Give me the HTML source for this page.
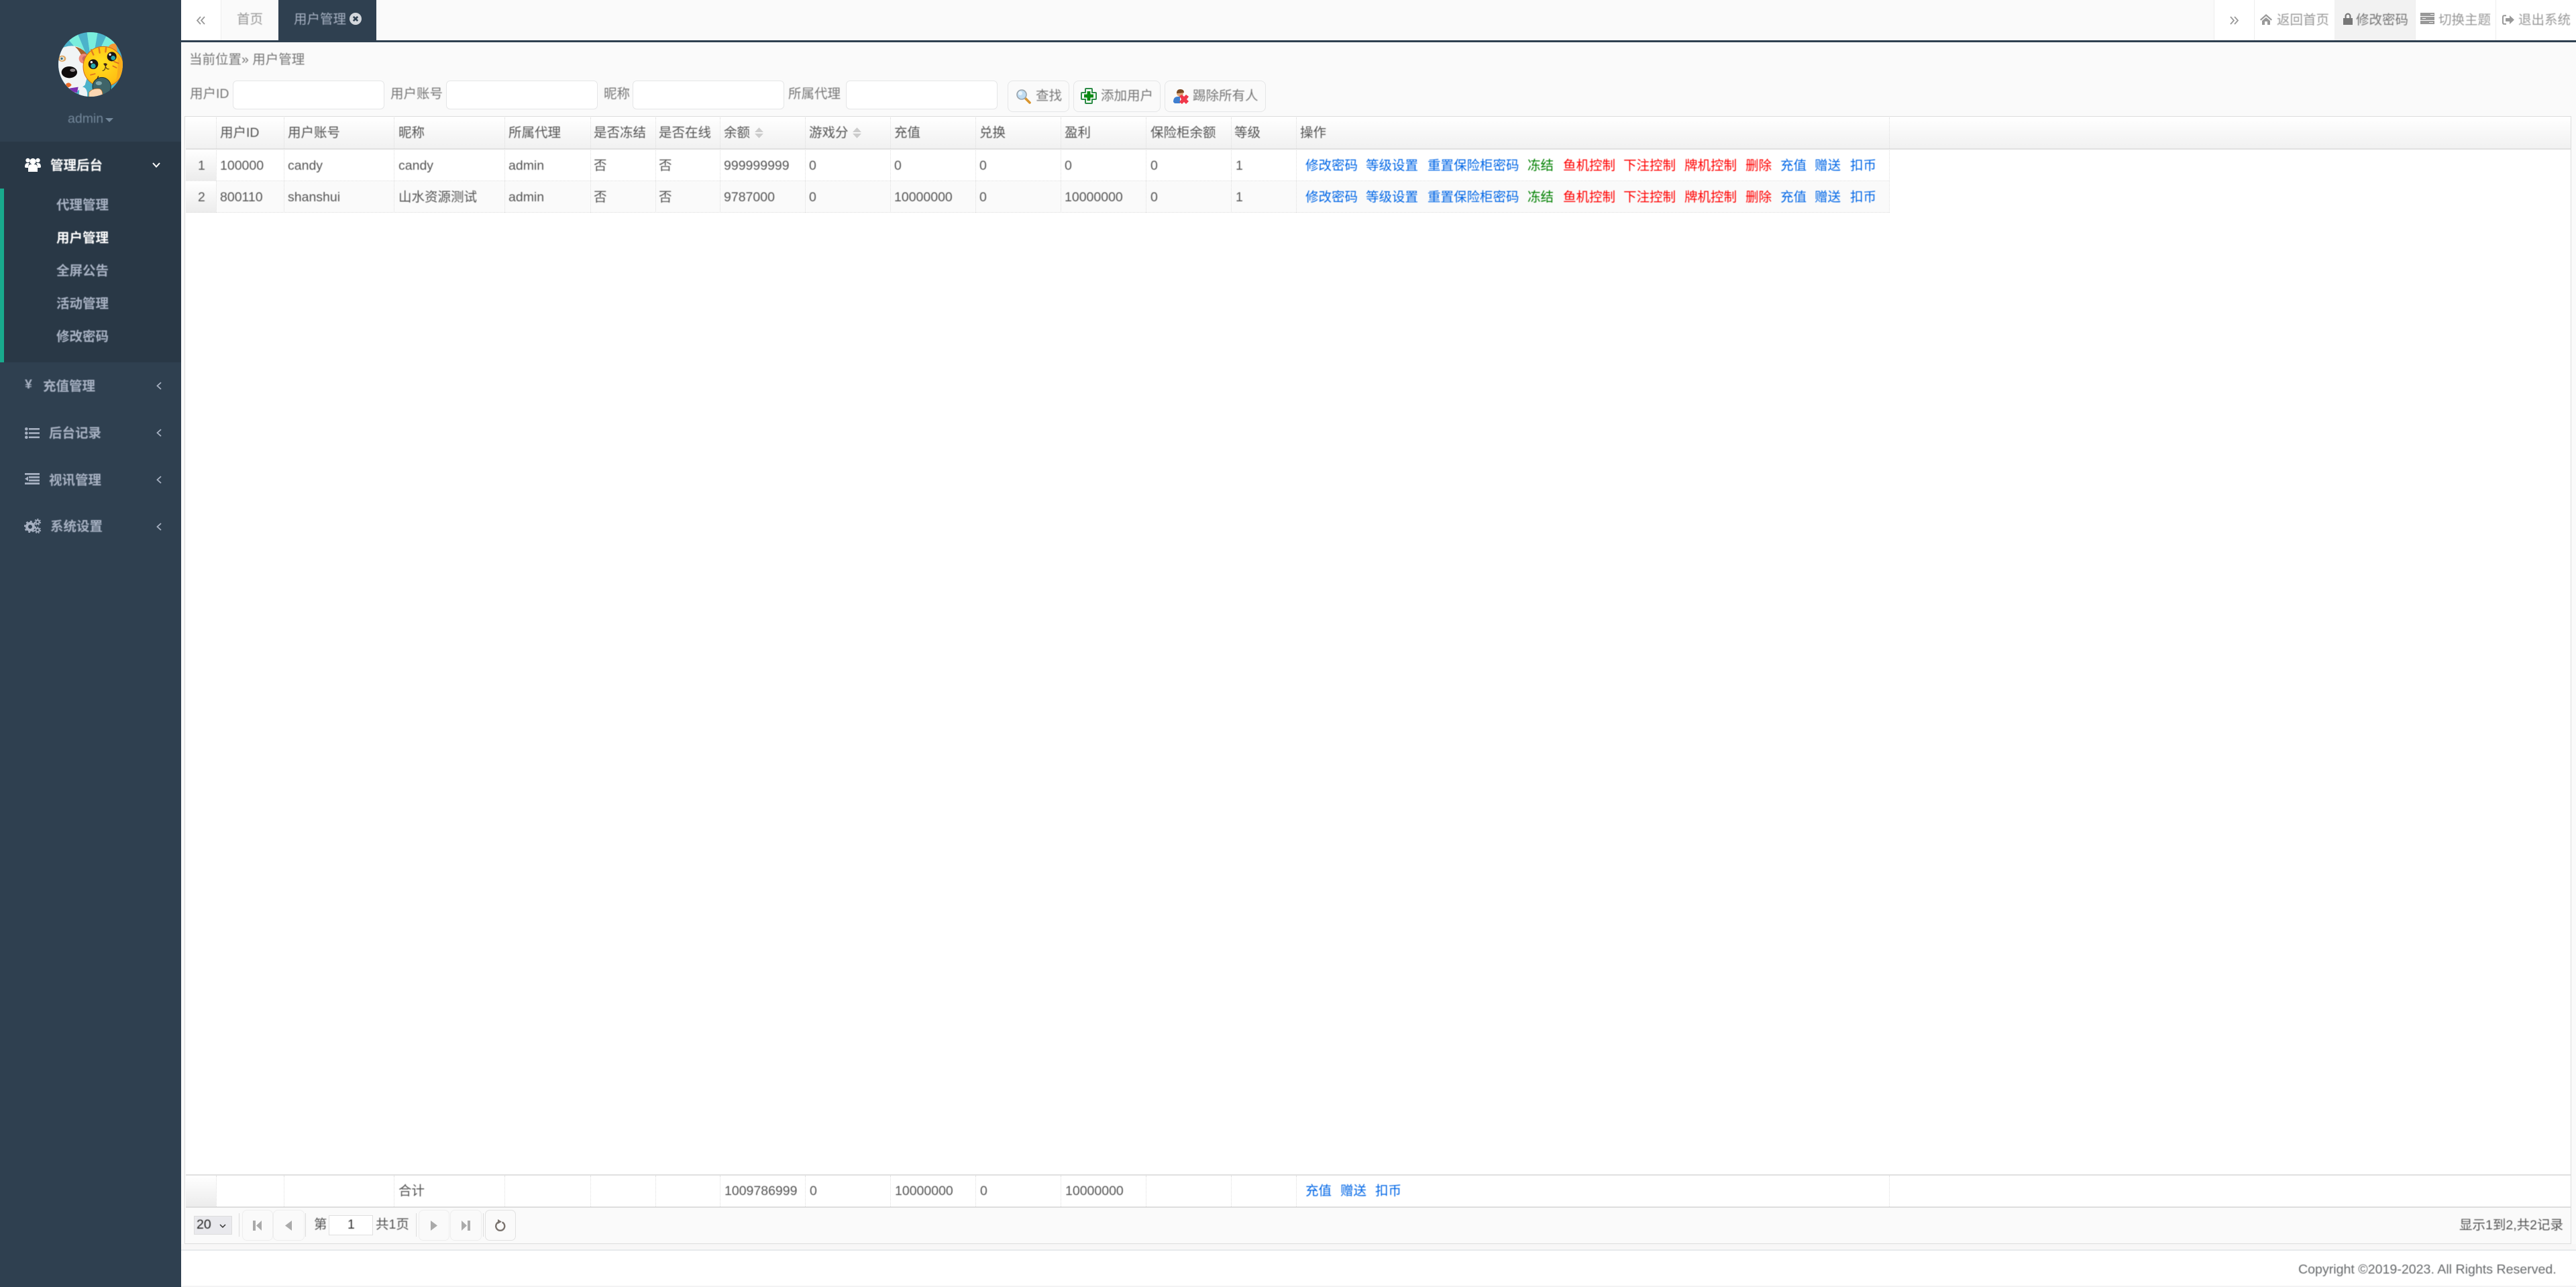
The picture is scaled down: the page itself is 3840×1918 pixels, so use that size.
<!DOCTYPE html>
<html lang="zh"><head><meta charset="utf-8"><title>用户管理</title>
<style>
html,body{margin:0;padding:0;width:3840px;height:1918px;overflow:hidden;background:#fff}
body{font-family:"Liberation Sans","Noto Sans CJK SC",sans-serif;font-size:19.5px;color:#555;position:relative}
.a{position:absolute}
.t{position:absolute;white-space:nowrap;line-height:30px;height:30px;filter:blur(.5px)}
.n{font-weight:700;color:#a7b1c2}
.v{position:absolute;width:0;border-left:1.5px dotted #dedede}
.h{position:absolute;height:0;border-top:1.5px dotted #dedede}
.l{color:#777}
.inp{position:absolute;top:120px;height:41px;background:#fff;border:1.5px solid #e5e6e7;border-radius:6px}
.btn{position:absolute;top:120px;height:45px;border:1.5px solid #e5e6e7;border-radius:8px;background:#fafafa}
.pb{position:absolute;top:1803px;height:44px;border:1.5px solid #eee;border-radius:7px;background:#fafafa}
.rn{position:absolute;left:277px;width:45px;background:linear-gradient(#fff,#ececec)}
.b{color:#0066e6}.g{color:#008000}.r{color:#f00}
svg{position:absolute;overflow:visible}
</style></head><body>

<!-- sidebar -->
<div class="a" style="left:0;top:0;width:270px;height:1918px;background:#2f4050"></div>
<div class="a" style="left:0;top:211px;width:270px;height:329px;background:#293846"></div>
<div class="a" style="left:0;top:281px;width:6px;height:259px;background:#19aa8d"></div>

<svg style="left:87px;top:48px" width="96" height="96" viewBox="81 54 288 288">
<defs><clipPath id="c"><circle cx="225" cy="198" r="144"/></clipPath>
<radialGradient id="cat" cx=".45" cy=".4" r=".75"><stop offset="0" stop-color="#ffe01f"/><stop offset=".7" stop-color="#ffc013"/><stop offset="1" stop-color="#f78e10"/></radialGradient></defs>
<g clip-path="url(#c)">
<rect x="81" y="54" width="288" height="288" fill="#4cb2ca"/>
<path d="M230 210L208 50H258ZM230 210L120 80L165 55ZM230 210L300 60L345 90Z" fill="#7aeedd"/>
<path d="M230 210L258 50H300ZM165 55L208 50L230 210Z" fill="#4cb2ca"/>
<path d="M60 150Q110 105 165 118Q215 135 222 215L200 290L150 330H60Z" fill="#f1f4f5"/>
<path d="M155 118Q205 128 222 180L205 240Q195 215 190 175Q180 140 155 118Z" fill="#a8612c"/>
<circle cx="195" cy="172" r="22" fill="#ee8a7a"/><circle cx="200" cy="172" r="12" fill="#c4626a"/>
<ellipse cx="98" cy="172" rx="17" ry="14" fill="#dfa763"/><ellipse cx="97" cy="172" rx="10" ry="9" fill="#e6eff0"/><circle cx="96" cy="172" r="5" fill="#3d6a75"/>
<ellipse cx="130" cy="233" rx="35" ry="26" fill="#0e0c0c"/><ellipse cx="145" cy="224" rx="12" ry="7" fill="#8b8587"/>
<path d="M115 285q15-12 25 5q-10 14-25 10z" fill="#ea6a28"/>
<path d="M130 305l40-6-5 25-30-4z" fill="#7b2fb2"/>
<path d="M175 300q30-8 35 25v25h-38z" fill="#eef3f5"/>
<path d="M305 118q15-18 35-12l5 30-20 10z" fill="#f59a35"/>
<circle cx="282" cy="208" r="90" fill="url(#cat)" stroke="#d06a18" stroke-width="3"/>
<path d="M345 160q30 20 25 70l-30 40q10-50 5-110z" fill="#f8ab1c"/>
<path d="M228 133l10 22M262 122l4 24M295 120l-3 22" stroke="#e07a22" stroke-width="7" stroke-linecap="round"/>
<path d="M330 185l20 8M325 205l16 8M225 245l20-5" stroke="#dc6e22" stroke-width="5" stroke-linecap="round"/>
<circle cx="237" cy="197" r="22" fill="#1b1414"/><circle cx="237" cy="205" r="11" fill="#27a7ae"/><circle cx="229" cy="188" r="5" fill="#fff"/>
<circle cx="320" cy="163" r="21" fill="#1b1414"/><circle cx="326" cy="169" r="10" fill="#27a7ae"/><circle cx="312" cy="154" r="5" fill="#fff"/>
<path d="M282 195q10-6 18 2l-8 12z" fill="#3a2216"/><path d="M292 208q-2 18-14 18M292 208q6 14 16 10" stroke="#3a2216" stroke-width="3" fill="none"/>
<circle cx="275" cy="297" r="41" fill="#3f6468" stroke="#1d3033" stroke-width="3"/><ellipse cx="262" cy="282" rx="14" ry="9" fill="#7fa5a7"/>
<path d="M255 262l5-12" stroke="#3a2216" stroke-width="4"/>
<path d="M218 345v-22q15-20 47-16q18 8 12 38z" fill="#fcd7b2" stroke="#c66a1a" stroke-width="2"/>
</g></svg>

<div class="t" style="left:101px;top:162px;color:#73879a">admin</div>
<svg style="left:157px;top:176px" width="12" height="7"><path d="M0 0H12L6 6Z" fill="#73879a"/></svg>

<svg style="left:37px;top:235px" width="24" height="21" viewBox="0 0 24 21" fill="#fff"><circle cx="4.5" cy="4" r="3.2"/><circle cx="19.5" cy="4" r="3.2"/><circle cx="12" cy="5.5" r="4.6"/><path d="M0 14q0-6 4-6h3q-2 3-2 7H1zM24 14q0-6-4-6h-3q2 3 2 7h4zM5 21v-5q0-6 4-6h6q4 0 4 6v5z"/></svg>
<div class="t" style="left:75px;top:232px;font-weight:700;color:#fff">管理后台</div>
<svg style="left:227px;top:242px" width="12" height="8" fill="none"><path d="M1 1l5 5.5L11 1" stroke="#fff" stroke-width="2"/></svg>

<div class="t n" style="left:84px;top:291px">代理管理</div>
<div class="t n" style="left:84px;top:340px;color:#fff">用户管理</div>
<div class="t n" style="left:84px;top:389px">全屏公告</div>
<div class="t n" style="left:84px;top:438px">活动管理</div>
<div class="t n" style="left:84px;top:487px">修改密码</div>

<div class="t n" style="left:37px;top:558px">¥</div>
<div class="t n" style="left:64px;top:561px">充值管理</div>
<svg style="left:233px;top:569px" width="8" height="12" fill="none"><path d="M7 1L1.5 6L7 11" stroke="#a7b1c2" stroke-width="1.8"/></svg>

<svg style="left:37px;top:637px" width="22" height="17" fill="#a7b1c2"><circle cx="2.3" cy="2.3" r="2.3"/><circle cx="2.3" cy="8.5" r="2.3"/><circle cx="2.3" cy="14.7" r="2.3"/><rect x="6" y="1" width="16" height="2.6"/><rect x="6" y="7.2" width="16" height="2.6"/><rect x="6" y="13.4" width="16" height="2.6"/></svg>
<div class="t n" style="left:73px;top:631px">后台记录</div>
<svg style="left:233px;top:639px" width="8" height="12" fill="none"><path d="M7 1L1.5 6L7 11" stroke="#a7b1c2" stroke-width="1.8"/></svg>

<svg style="left:37px;top:705px" width="22" height="17" fill="#a7b1c2"><rect x="0" y="0" width="22" height="2.8"/><rect x="6" y="4.8" width="16" height="2.8"/><rect x="6" y="9.6" width="16" height="2.8"/><rect x="0" y="14.2" width="22" height="2.8"/><path d="M5 5v7L0 8.5z"/></svg>
<div class="t n" style="left:73px;top:701px">视讯管理</div>
<svg style="left:233px;top:709px" width="8" height="12" fill="none"><path d="M7 1L1.5 6L7 11" stroke="#a7b1c2" stroke-width="1.8"/></svg>

<svg style="left:37px;top:773px" width="24" height="22" fill="none" stroke="#a7b1c2"><circle cx="8" cy="12" r="5" stroke-width="4"/><circle cx="8" cy="12" r="8" stroke-width="2" stroke-dasharray="3 3.2"/><circle cx="19" cy="5" r="2.6" stroke-width="2"/><circle cx="19" cy="5" r="4.4" stroke-width="1.4" stroke-dasharray="2 2"/><circle cx="19" cy="17" r="2.6" stroke-width="2"/><circle cx="19" cy="17" r="4.4" stroke-width="1.4" stroke-dasharray="2 2"/></svg>
<div class="t n" style="left:75px;top:770px">系统设置</div>
<svg style="left:233px;top:779px" width="8" height="12" fill="none"><path d="M7 1L1.5 6L7 11" stroke="#a7b1c2" stroke-width="1.8"/></svg>

<!-- content bg -->
<div class="a" style="left:270px;top:0;width:3570px;height:1862px;background:#fafafa"></div>

<!-- top bar -->
<div class="a" style="left:270px;top:0;width:59px;height:60px;background:#fff;border-right:1px solid #eee"></div>
<div class="a" style="left:415px;top:0;width:146px;height:60px;background:#2f4050"></div>
<div class="a" style="left:270px;top:60px;width:3570px;height:3px;background:#2f4050"></div>
<svg style="left:293px;top:24px" width="13" height="13" fill="none" stroke="#999" stroke-width="1.8"><path d="M6 1L1 6.5L6 12M12 1L7 6.5L12 12"/></svg>
<div class="t" style="left:353px;top:14px;color:#999">首页</div>
<div class="t" style="left:438px;top:14px;color:#a7b1c2">用户管理</div>
<svg style="left:521px;top:19px" width="18" height="18"><circle cx="9" cy="9" r="9" fill="#d3d7dc"/><path d="M5.8 5.8l6.4 6.4M12.2 5.8l-6.4 6.4" stroke="#2f4050" stroke-width="2.6"/></svg>

<div class="a" style="left:3300px;top:0;width:540px;height:60px;background:#fff"></div>
<div class="a" style="left:3480px;top:0;width:120px;height:60px;background:#f2f2f2"></div>
<div class="a" style="left:3300px;top:0;width:1px;height:60px;background:#eee"></div>
<div class="a" style="left:3360px;top:0;width:1px;height:60px;background:#eee"></div>
<div class="a" style="left:3600px;top:0;width:1px;height:60px;background:#eee"></div>
<div class="a" style="left:3720px;top:0;width:1px;height:60px;background:#eee"></div>
<svg style="left:3324px;top:24px" width="13" height="13" fill="none" stroke="#999" stroke-width="1.8"><path d="M1 1L6 6.5L1 12M7 1L12 6.5L7 12"/></svg>
<svg style="left:3369px;top:21px" width="18" height="16" fill="#999"><path d="M9 0l9 8-1.4 1.6L9 3 1.4 9.6 0 8zM3 10l6-5 6 5v6h-4v-5H7v5H3z"/></svg>
<div class="t" style="left:3394px;top:15px;color:#999">返回首页</div>
<svg style="left:3493px;top:19px" width="14" height="18" fill="#777"><path d="M0 8h14v10H0zM2.5 8V5a4.5 4.5 0 0 1 9 0v3H9.3V5a2.3 2.3 0 0 0-4.6 0v3z"/></svg>
<div class="t" style="left:3512px;top:15px;color:#777">修改密码</div>
<svg style="left:3608px;top:19px" width="21" height="17" fill="#999"><rect width="21" height="5"/><rect y="6" width="21" height="5"/><rect y="12" width="21" height="5"/><rect x="15" y="2" width="5" height="1" fill="#eee"/><rect x="3" y="8" width="5" height="1" fill="#eee"/><rect x="13" y="14" width="6" height="1" fill="#eee"/></svg>
<div class="t" style="left:3635px;top:15px;color:#999">切换主题</div>
<svg style="left:3730px;top:22px" width="18" height="15"><path d="M6 1.2H3Q1 1.2 1 3.2v8.600q0 2 2 2h3" fill="none" stroke="#999" stroke-width="2"/><path d="M5 5h6V1l7 6.500-7 6.500v-4H5z" fill="#999"/></svg>
<div class="t" style="left:3754px;top:15px;color:#999">退出系统</div>

<!-- breadcrumb -->
<div class="t l" style="left:282px;top:74px">当前位置» 用户管理</div>

<!-- search -->
<div class="t l" style="left:283px;top:125px">用户ID</div>
<div class="inp" style="left:347px;width:224px"></div>
<div class="t l" style="left:582px;top:125px">用户账号</div>
<div class="inp" style="left:665px;width:224px"></div>
<div class="t l" style="left:900px;top:125px">昵称</div>
<div class="inp" style="left:943px;width:224px"></div>
<div class="t l" style="left:1175px;top:125px">所属代理</div>
<div class="inp" style="left:1261px;width:224px"></div>

<div class="btn" style="left:1502px;width:90px"></div>
<svg style="left:1515px;top:133px" width="22" height="21"><path d="M13 13l7 7" stroke="#d9952e" stroke-width="3.6" stroke-linecap="round"/><circle cx="8" cy="8" r="7" fill="#bfdcf2" stroke="#9aa4ac" stroke-width="1.6"/><circle cx="6" cy="6" r="3" fill="#eaf5fc"/></svg>
<div class="t l" style="left:1544px;top:128px">查找</div>
<div class="btn" style="left:1600px;width:128px"></div>
<svg style="left:1611px;top:131px" width="24" height="24"><path d="M8 1h8q1 0 1 1v5h5q1 0 1 1v8q0 1-1 1h-5v5q0 1-1 1H8q-1 0-1-1v-5H2q-1 0-1-1V8q0-1 1-1h5V2q0-1 1-1z" fill="#fff" stroke="#2c8b45" stroke-width="2"/><path d="M9.500 5h5v4.500H19v5h-4.500V19h-5v-4.500H5v-5h4.500z" fill="#0a8a12"/></svg>
<div class="t l" style="left:1641px;top:128px">添加用户</div>
<div class="btn" style="left:1736px;width:149px"></div>
<svg style="left:1749px;top:133px" width="23" height="22"><path d="M0 19q0-8 7-8h3v10H2z" fill="#3f7fd0"/><circle cx="10" cy="6" r="5" fill="#e2a878"/><path d="M5 6q0-6 5.500-6T16 5q-5 1-11 1z" fill="#7a4a22"/><path d="M9 10l4-2 3 3 3-3 4 3-3 4 3 3-4 4-3-3-3 3-4-3 3-4z" fill="#f0384a"/></svg>
<div class="t l" style="left:1778px;top:128px">踢除所有人</div>

<!-- table box -->
<div class="a" style="left:275px;top:173px;width:3558px;height:1681px;background:#fff;border:1.5px solid #ddd;box-sizing:border-box"></div>
<div class="a" style="left:277px;top:175px;width:3555px;height:46px;background:linear-gradient(#fff,#f1f1f1)"></div>
<div class="a" style="left:277px;top:221px;width:3555px;height:2px;background:#e0e0e0"></div>
<div class="a" style="left:322px;top:270px;width:2494px;height:47px;background:#fafafa"></div>
<div class="rn" style="top:223px;height:46px"></div>
<div class="rn" style="top:270px;height:47px"></div>
<div class="h" style="left:277px;top:269px;width:2539px"></div>
<div class="h" style="left:277px;top:316px;width:2539px"></div>

<!-- header and rows vlines -->
<div class="v" style="left:322px;top:175px;height:142px"></div>
<div class="v" style="left:423px;top:175px;height:142px"></div>
<div class="v" style="left:587px;top:175px;height:142px"></div>
<div class="v" style="left:752px;top:175px;height:142px"></div>
<div class="v" style="left:880px;top:175px;height:142px"></div>
<div class="v" style="left:977px;top:175px;height:142px"></div>
<div class="v" style="left:1073px;top:175px;height:142px"></div>
<div class="v" style="left:1200px;top:175px;height:142px"></div>
<div class="v" style="left:1327px;top:175px;height:142px"></div>
<div class="v" style="left:1454px;top:175px;height:142px"></div>
<div class="v" style="left:1581px;top:175px;height:142px"></div>
<div class="v" style="left:1708px;top:175px;height:142px"></div>
<div class="v" style="left:1835px;top:175px;height:142px"></div>
<div class="v" style="left:1932px;top:175px;height:142px"></div>
<div class="v" style="left:2816px;top:175px;height:142px"></div>

<!-- header text -->
<div class="t" style="left:328px;top:183px">用户ID</div>
<div class="t" style="left:429px;top:183px">用户账号</div>
<div class="t" style="left:594px;top:183px">昵称</div>
<div class="t" style="left:758px;top:183px">所属代理</div>
<div class="t" style="left:885px;top:183px">是否冻结</div>
<div class="t" style="left:982px;top:183px">是否在线</div>
<div class="t" style="left:1079px;top:183px">余额</div>
<svg style="left:1125px;top:190px" width="13" height="16" fill="#ccc"><path d="M6.500 0L13 7H0zM0 9h13l-6.500 7z"/></svg>
<div class="t" style="left:1206px;top:183px">游戏分</div>
<svg style="left:1271px;top:190px" width="13" height="16" fill="#ccc"><path d="M6.500 0L13 7H0zM0 9h13l-6.500 7z"/></svg>
<div class="t" style="left:1333px;top:183px">充值</div>
<div class="t" style="left:1460px;top:183px">兑换</div>
<div class="t" style="left:1587px;top:183px">盈利</div>
<div class="t" style="left:1715px;top:183px">保险柜余额</div>
<div class="t" style="left:1840px;top:183px">等级</div>
<div class="t" style="left:1938px;top:183px">操作</div>

<!-- row 1 -->
<div class="t" style="left:295px;top:232px">1</div>
<div class="t" style="left:328px;top:232px">100000</div>
<div class="t" style="left:429px;top:232px">candy</div>
<div class="t" style="left:594px;top:232px">candy</div>
<div class="t" style="left:758px;top:232px">admin</div>
<div class="t" style="left:885px;top:232px">否</div>
<div class="t" style="left:982px;top:232px">否</div>
<div class="t" style="left:1079px;top:232px">999999999</div>
<div class="t" style="left:1206px;top:232px">0</div>
<div class="t" style="left:1333px;top:232px">0</div>
<div class="t" style="left:1460px;top:232px">0</div>
<div class="t" style="left:1587px;top:232px">0</div>
<div class="t" style="left:1715px;top:232px">0</div>
<div class="t" style="left:1842px;top:232px">1</div>
<div class="t b" style="left:1946px;top:232px">修改密码</div>
<div class="t b" style="left:2036px;top:232px">等级设置</div>
<div class="t b" style="left:2128px;top:232px">重置保险柜密码</div>
<div class="t g" style="left:2277px;top:232px">冻结</div>
<div class="t r" style="left:2330px;top:232px">鱼机控制</div>
<div class="t r" style="left:2420px;top:232px">下注控制</div>
<div class="t r" style="left:2511px;top:232px">牌机控制</div>
<div class="t r" style="left:2602px;top:232px">删除</div>
<div class="t b" style="left:2654px;top:232px">充值</div>
<div class="t b" style="left:2705px;top:232px">赠送</div>
<div class="t b" style="left:2758px;top:232px">扣币</div>

<!-- row 2 -->
<div class="t" style="left:295px;top:279px">2</div>
<div class="t" style="left:328px;top:279px">800110</div>
<div class="t" style="left:429px;top:279px">shanshui</div>
<div class="t" style="left:594px;top:279px">山水资源测试</div>
<div class="t" style="left:758px;top:279px">admin</div>
<div class="t" style="left:885px;top:279px">否</div>
<div class="t" style="left:982px;top:279px">否</div>
<div class="t" style="left:1079px;top:279px">9787000</div>
<div class="t" style="left:1206px;top:279px">0</div>
<div class="t" style="left:1333px;top:279px">10000000</div>
<div class="t" style="left:1460px;top:279px">0</div>
<div class="t" style="left:1587px;top:279px">10000000</div>
<div class="t" style="left:1715px;top:279px">0</div>
<div class="t" style="left:1842px;top:279px">1</div>
<div class="t b" style="left:1946px;top:279px">修改密码</div>
<div class="t b" style="left:2036px;top:279px">等级设置</div>
<div class="t b" style="left:2128px;top:279px">重置保险柜密码</div>
<div class="t g" style="left:2277px;top:279px">冻结</div>
<div class="t r" style="left:2330px;top:279px">鱼机控制</div>
<div class="t r" style="left:2420px;top:279px">下注控制</div>
<div class="t r" style="left:2511px;top:279px">牌机控制</div>
<div class="t r" style="left:2602px;top:279px">删除</div>
<div class="t b" style="left:2654px;top:279px">充值</div>
<div class="t b" style="left:2705px;top:279px">赠送</div>
<div class="t b" style="left:2758px;top:279px">扣币</div>

<!-- footer row -->
<div class="a" style="left:277px;top:1750px;width:3555px;height:2px;background:#e0e0e0"></div>
<div class="rn" style="top:1752px;height:46px"></div>
<div class="a" style="left:277px;top:1798px;width:3555px;height:2px;background:#ddd"></div>
<div class="v" style="left:322px;top:1752px;height:46px"></div>
<div class="v" style="left:423px;top:1752px;height:46px"></div>
<div class="v" style="left:587px;top:1752px;height:46px"></div>
<div class="v" style="left:752px;top:1752px;height:46px"></div>
<div class="v" style="left:880px;top:1752px;height:46px"></div>
<div class="v" style="left:977px;top:1752px;height:46px"></div>
<div class="v" style="left:1073px;top:1752px;height:46px"></div>
<div class="v" style="left:1200px;top:1752px;height:46px"></div>
<div class="v" style="left:1327px;top:1752px;height:46px"></div>
<div class="v" style="left:1454px;top:1752px;height:46px"></div>
<div class="v" style="left:1581px;top:1752px;height:46px"></div>
<div class="v" style="left:1708px;top:1752px;height:46px"></div>
<div class="v" style="left:1835px;top:1752px;height:46px"></div>
<div class="v" style="left:1932px;top:1752px;height:46px"></div>
<div class="v" style="left:2816px;top:1752px;height:46px"></div>
<div class="t" style="left:594px;top:1760px">合计</div>
<div class="t" style="left:1080px;top:1760px">1009786999</div>
<div class="t" style="left:1207px;top:1760px">0</div>
<div class="t" style="left:1334px;top:1760px">10000000</div>
<div class="t" style="left:1461px;top:1760px">0</div>
<div class="t" style="left:1588px;top:1760px">10000000</div>
<div class="t b" style="left:1946px;top:1760px">充值</div>
<div class="t b" style="left:1998px;top:1760px">赠送</div>
<div class="t b" style="left:2050px;top:1760px">扣币</div>

<!-- pagination -->
<div class="a" style="left:277px;top:1800px;width:3555px;height:53px;background:#fafafa"></div>
<div class="a" style="left:289px;top:1812px;width:55px;height:26px;background:#e9e9ed;border:1.5px solid #ddd"></div>
<div class="t" style="left:293px;top:1810px;color:#222">20</div>
<svg style="left:327px;top:1824px" width="10" height="6" fill="none"><path d="M1 1l4 4 4-4" stroke="#333" stroke-width="1.5"/></svg>
<div class="a" style="left:356px;top:1808px;width:1px;height:35px;background:#ddd"></div>
<div class="pb" style="left:361px;width:44px"></div>
<svg style="left:377px;top:1819px" width="13" height="15" fill="#aaa"><rect width="4" height="15"/><path d="M13 0v15L5 7.500z"/></svg>
<div class="pb" style="left:407px;width:45px"></div>
<svg style="left:425px;top:1819px" width="10" height="15" fill="#aaa"><path d="M10 0v15L0 7.500z"/></svg>
<div class="a" style="left:455px;top:1808px;width:1px;height:35px;background:#ddd"></div>
<div class="t" style="left:468px;top:1810px">第</div>
<div class="a" style="left:490px;top:1811px;width:64px;height:28px;background:#fff;border:1.5px solid #e0e0e0"></div>
<div class="t" style="left:518px;top:1810px;color:#333">1</div>
<div class="t" style="left:560px;top:1810px">共1页</div>
<div class="a" style="left:620px;top:1808px;width:1px;height:35px;background:#ddd"></div>
<div class="pb" style="left:624px;width:44px"></div>
<svg style="left:642px;top:1819px" width="10" height="15" fill="#aaa"><path d="M0 0v15L10 7.500z"/></svg>
<div class="pb" style="left:671px;width:45px"></div>
<svg style="left:688px;top:1819px" width="13" height="15" fill="#aaa"><rect x="9" width="4" height="15"/><path d="M0 0v15L8 7.500z"/></svg>
<div class="a" style="left:720px;top:1808px;width:1px;height:35px;background:#ddd"></div>
<div class="pb" style="left:723px;width:44px;border-color:#e2e2e2"></div>
<svg style="left:738px;top:1817px" width="16" height="18" fill="none"><path d="M10.500 4.400A6.500 6.500 0 1 1 5 4.400" stroke="#7a736e" stroke-width="2.4"/><path d="M4 0l6 3.800-6 3.200z" fill="#7a736e"/></svg>
<div class="t" style="left:3666px;top:1811px">显示1到2,共2记录</div>

<!-- bottom -->
<div class="a" style="left:270px;top:1854px;width:3570px;height:8px;background:#f8f7f7"></div>
<div class="a" style="left:270px;top:1862px;width:3570px;height:1.5px;background:#e7eaec"></div>
<div class="a" style="left:270px;top:1864px;width:3570px;height:52px;background:#fff"></div>
<div class="a" style="left:270px;top:1916px;width:3570px;height:2px;background:#f3f3f4"></div>
<div class="t" style="left:3426px;top:1877px;color:#676a6c;font-size:19.6px">Copyright ©2019-2023. All Rights Reserved.</div>
</body></html>
